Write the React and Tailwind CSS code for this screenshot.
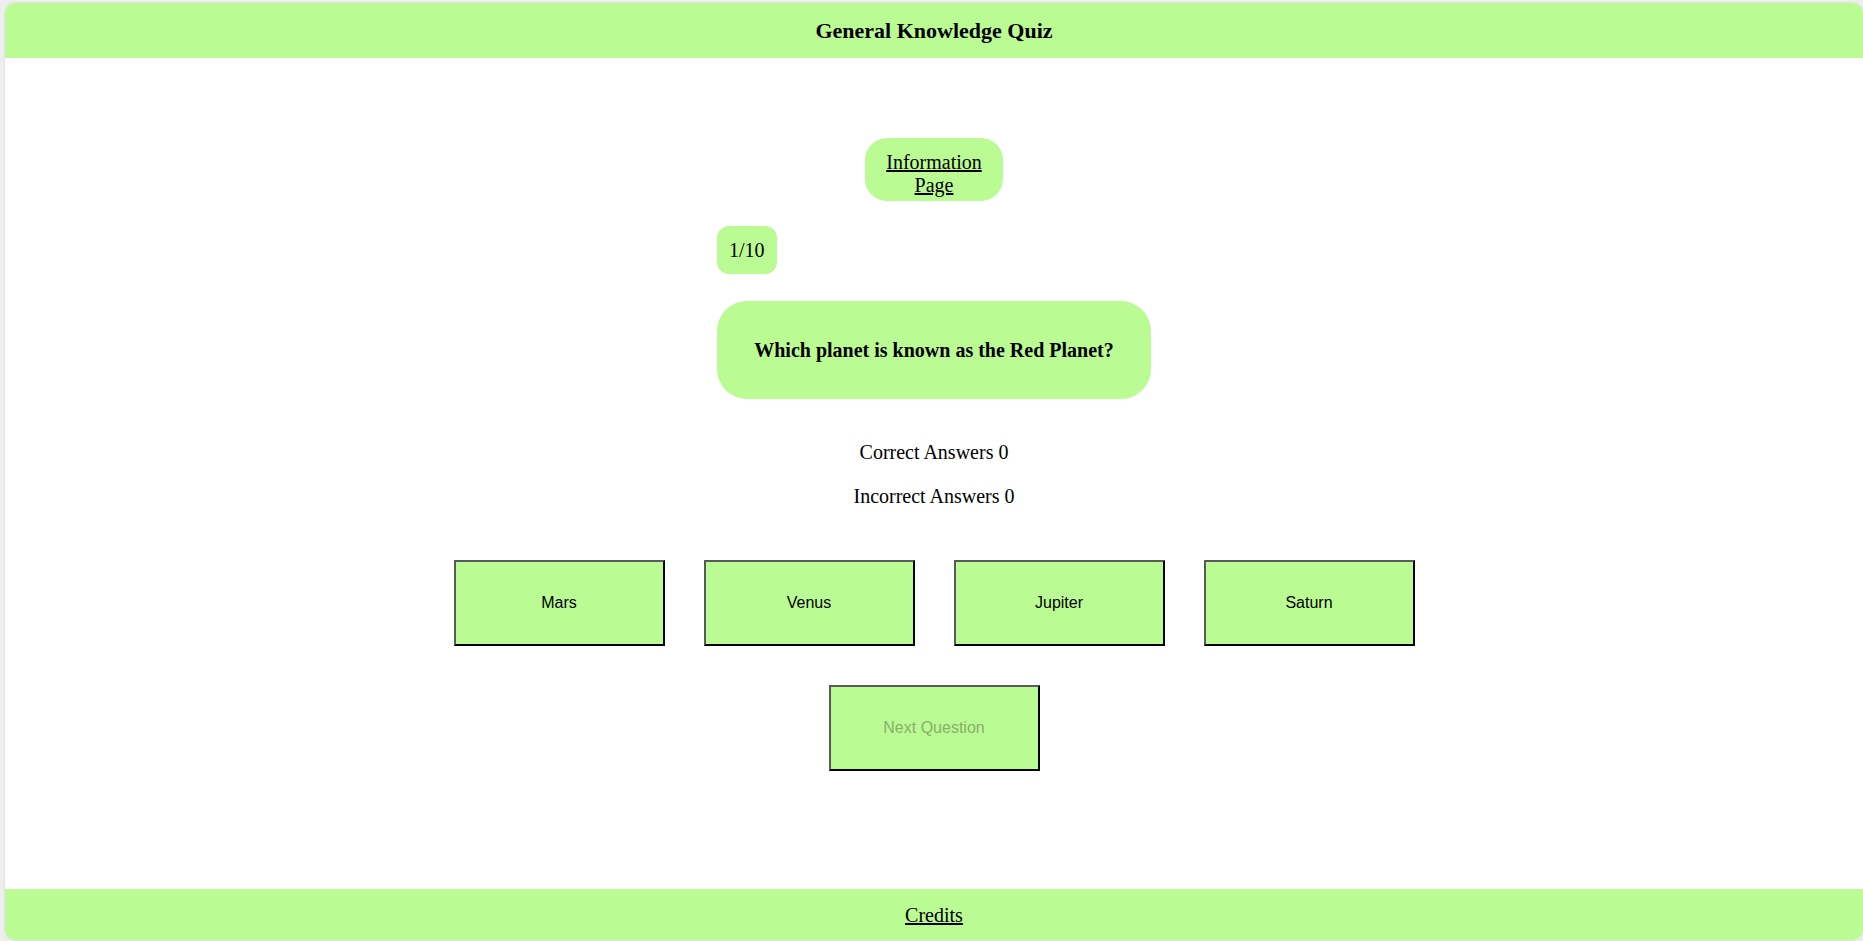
import React, { useState } from "react";

const answers = ["Mars", "Venus", "Jupiter", "Saturn"];

const App = () => {
  const [picked, setPicked] = useState(null);

  return (
    <div className="w-full h-[941px] bg-[#eeeeee] pt-[3px] pl-[5px] font-['Liberation_Serif',serif] text-[20px] text-black">
      <div className="h-[937px] bg-white rounded-[10px] overflow-hidden flex flex-col shadow-[0_0_2px_rgba(0,0,0,0.15)]">
        <header className="h-[55px] shrink-0 bg-[#bbfb93] flex items-center justify-center">
          <h1 className="text-[22px] font-bold leading-none">General Knowledge Quiz</h1>
        </header>

        <main className="flex-1 flex flex-col items-center">
          <a
            href="#"
            className="mt-[80px] w-[138px] h-[63px] pt-[13px] rounded-[22px] bg-[#bbfb93] block text-center leading-[23px] underline"
          >
            Information Page
          </a>

          <div className="w-[434px] flex flex-col items-start mt-[25px]">
            <div className="h-[48px] px-[12px] rounded-[12px] bg-[#bbfb93] flex items-center">
              1/10
            </div>
            <div className="mt-[27px] w-[434px] h-[98px] rounded-[30px] bg-[#bbfb93] flex items-center justify-center font-bold">
              Which planet is known as the Red Planet?
            </div>
          </div>

          <p className="mt-[42px] leading-[23px]">Correct Answers 0</p>
          <p className="mt-[21px] leading-[23px]">Incorrect Answers 0</p>

          <div className="mt-[52px] flex gap-[39px]">
            {answers.map((a) => (
              <button
                key={a}
                onClick={() => setPicked(a)}
                className="w-[211px] h-[86px] bg-[#bbfb93] border-2 border-t-[#5a5a5a] border-l-[#5a5a5a] border-r-black border-b-black font-['Liberation_Sans',Arial,sans-serif] text-[16px] text-black"
              >
                {a}
              </button>
            ))}
          </div>

          <button
            disabled={!picked}
            className="mt-[39px] w-[211px] h-[86px] bg-[#bbfb93] border-2 border-t-[#5a5a5a] border-l-[#5a5a5a] border-r-black border-b-black font-['Liberation_Sans',Arial,sans-serif] text-[16px] text-[#8aad6c]"
          >
            Next Question
          </button>
        </main>

        <footer className="h-[51px] shrink-0 bg-[#bbfb93] flex items-center justify-center">
          <a href="#" className="underline leading-none">
            Credits
          </a>
        </footer>
      </div>
    </div>
  );
};

export default App;
